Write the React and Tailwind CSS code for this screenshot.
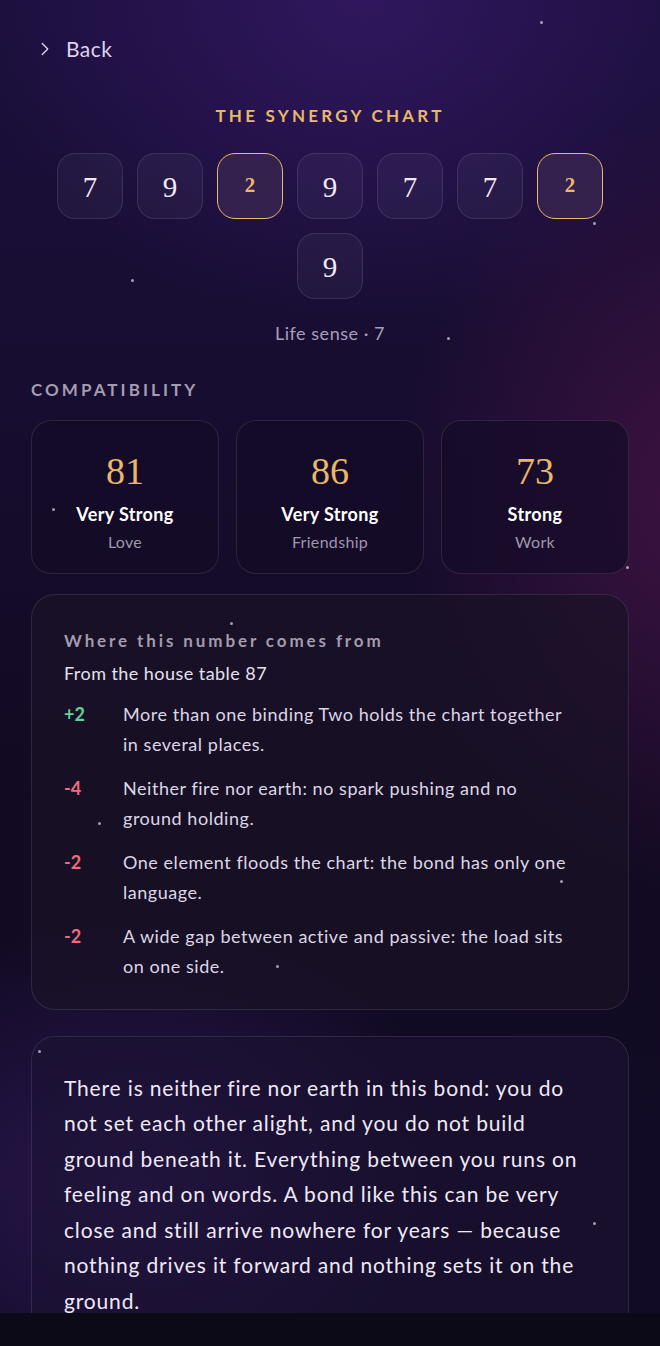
import { ChevronRight } from 'lucide-react';

const chart = [
  { n: '7' },
  { n: '9' },
  { n: '2', bond: true },
  { n: '9' },
  { n: '7' },
  { n: '7' },
  { n: '2', bond: true },
];

const scores = [
  { value: '81', level: 'Very Strong', area: 'Love' },
  { value: '86', level: 'Very Strong', area: 'Friendship' },
  { value: '73', level: 'Strong', area: 'Work' },
];

const factors = [
  { delta: '+2', good: true, text: 'More than one binding Two holds the chart together in several places.' },
  { delta: '-4', text: 'Neither fire nor earth: no spark pushing and no ground holding.' },
  { delta: '-2', text: 'One element floods the chart: the bond has only one language.' },
  { delta: '-2', text: 'A wide gap between active and passive: the load sits on one side.' },
];

const stars = [
  'top-[21px] left-[540px]',
  'top-[222px] left-[593px]',
  'top-[279px] left-[131px]',
  'top-[337px] left-[447px]',
  'top-[508px] left-[52px]',
  'top-[566px] left-[626px]',
  'top-[622px] left-[230px]',
  'top-[822px] left-[98px]',
  'top-[880px] left-[560px]',
  'top-[965px] left-[276px]',
  'top-[1050px] left-[38px]',
  'top-[1222px] left-[593px]',
];

function Tile({ n, bond }) {
  return (
    <div
      className={`w-[66px] h-[66px] rounded-[18px] flex items-center justify-center ${
        bond
          ? 'border-[1.5px] border-[#e9b96c] bg-[#3a2550]/80'
          : 'border border-white/10 bg-white/[0.04]'
      }`}
    >
      <span
        className={`font-['Liberation_Serif',serif] ${
          bond ? 'text-[21px] font-bold text-[#eab96a]' : 'text-[29px] text-[#f1eaf8] pt-1'
        }`}
      >
        {n}
      </span>
    </div>
  );
}

export default function App() {
  return (
    <div className="relative w-[660px] h-[1346px] overflow-hidden bg-[#0d0a18] font-['Lato',sans-serif]">
      <div className="relative h-[1313px] overflow-hidden bg-[radial-gradient(ellipse_60%_25%_at_55%_0%,#30175e_0%,transparent_100%),radial-gradient(ellipse_45%_30%_at_105%_38%,#3c1240_0%,transparent_100%),radial-gradient(ellipse_50%_20%_at_20%_90%,#2a1650_0%,transparent_100%),linear-gradient(180deg,#1b0f3c_0%,#170d30_30%,#120a22_60%,#120b26_100%)]">
        {stars.map((s) => (
          <span key={s} className={`absolute w-[3px] h-[3px] rounded-full bg-white/60 ${s}`} />
        ))}

        <div className="px-[31px]">
          <button type="button" className="flex items-center gap-[10px] pt-[35px] pl-[3px] text-[#ddd3ec]">
            <ChevronRight size={22} strokeWidth={1.5} />
            <span className="text-[21px] leading-[28px] tracking-[0.02em]">Back</span>
          </button>

          <h2 className="mt-[40px] text-center text-[17px] font-bold tracking-[0.19em] text-[#e8b86a]">
            THE SYNERGY CHART
          </h2>

          <div className="mt-[24px] flex flex-wrap justify-center gap-[14px] px-[25px]">
            {chart.map((t, i) => (
              <Tile key={i} {...t} />
            ))}
            <Tile n="9" />
          </div>

          <p className="mt-[21px] text-center text-[18px] tracking-[0.03em] text-[#a99ebd]">Life sense · 7</p>

          <h3 className="mt-[30px] text-[17px] font-bold tracking-[0.18em] text-[#a39cb2]">COMPATIBILITY</h3>

          <div className="mt-[18px] grid grid-cols-3 gap-[17px]">
            {scores.map((s) => (
              <div
                key={s.area}
                className="h-[154px] rounded-[20px] border border-white/10 bg-[#140c26]/70 flex flex-col items-center pt-[28px]"
              >
                <span className="font-['Liberation_Serif',serif] text-[38px] leading-[44px] text-[#e8b86a]">
                  {s.value}
                </span>
                <span className="mt-[8px] text-[18px] font-bold tracking-[0.02em] text-white">{s.level}</span>
                <span className="mt-[2px] text-[16px] tracking-[0.02em] text-[#9f97ad]">{s.area}</span>
              </div>
            ))}
          </div>

          <div className="mt-[20px] rounded-[24px] border border-white/10 bg-[#1a1226]/70 px-[32px] pt-[33px] pb-[28px]">
            <p className="text-[17px] font-bold tracking-[0.17em] text-[#a29cab]">Where this number comes from</p>
            <p className="mt-[6px] text-[18px] tracking-[0.025em] text-[#e6e0ee]">From the house table 87</p>
            <div className="mt-[12px] flex flex-col gap-[14px]">
              {factors.map((f, i) => (
                <div key={i} className="flex">
                  <span
                    className={`w-[59px] shrink-0 text-[18px] font-bold leading-[30px] ${
                      f.good ? 'text-[#5fd39a]' : 'text-[#f0697f]'
                    }`}
                  >
                    {f.delta}
                  </span>
                  <p className="max-w-[452px] text-[18px] leading-[30px] tracking-[0.03em] text-[#ddd6e6]">{f.text}</p>
                </div>
              ))}
            </div>
          </div>

          <div className="mt-[26px] rounded-t-[24px] border border-b-0 border-white/10 bg-[#1a1230]/60 px-[32px] pt-[33px] pb-[40px]">
            <p className="text-[21px] leading-[35.5px] tracking-[0.04em] text-[#efe9f6]">
              There is neither fire nor earth in this bond: you do not set each other alight, and you do not build
              ground beneath it. Everything between you runs on feeling and on words. A bond like this can be very
              close and still arrive nowhere for years — because nothing drives it forward and nothing sets it on the
              ground.
            </p>
          </div>
        </div>
      </div>
    </div>
  );
}
